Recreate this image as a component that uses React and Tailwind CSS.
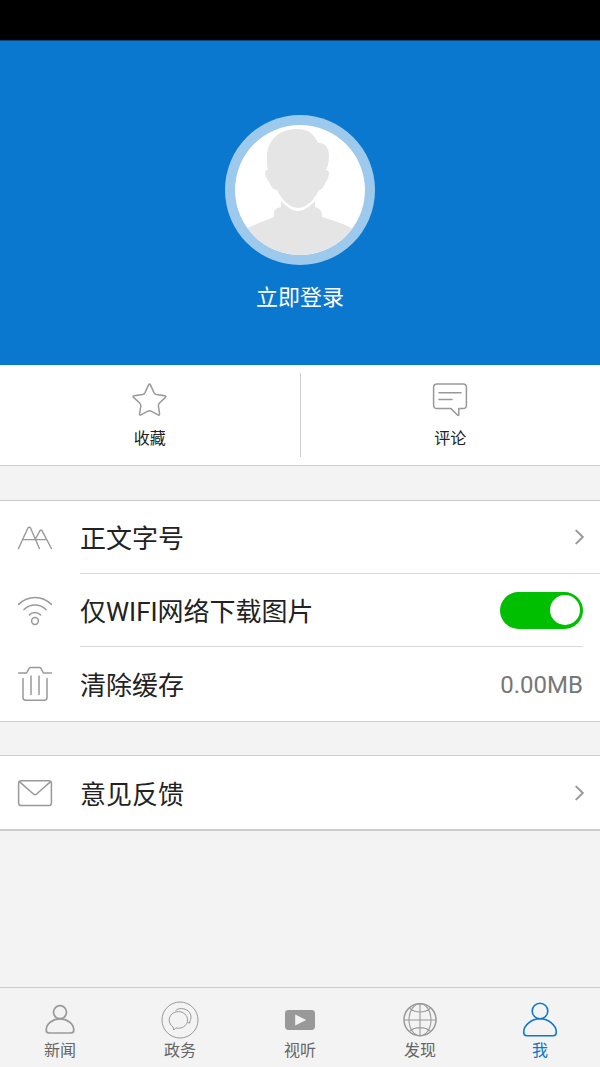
import { useState } from "react";

function Avatar() {
  return (
    <svg viewBox="0 0 130 130" className="size-full" aria-hidden="true">
      <g fill="#e5e5e5">
        <path d="M46 76 C52 82 57 86 63 86 C69 86 74 82 80 76 L80 82 C85 83 87 86 87 92 C100 96 110 99 122 106 L122 130 L8 130 L8 106 C18 99 28 97 39 92 C38 86 40 83 46 82 Z" />
        <path d="M63 4 C73 4 79 9 83 18 C91 17 94 24 94 31 C94 37 93 41 91 45 C96 45 94 52 91 57 C88 63 86 65 84 65 C80 74 71 83 63 83 C55 83 46 74 42 65 C39 65 37 63 34 57 C30 52 28 45 33 45 C32 41 32 38 32 32 C32 14 45 4 63 4 Z" />
      </g>
    </svg>
  );
}

function StarIcon() {
  return (
    <svg width="36" height="36" viewBox="0 0 36 36" fill="none" stroke="#999" strokeWidth="1.5" strokeLinejoin="round" aria-hidden="true">
      <path d="M16.7 2.6 Q17.5 1.2 18.3 2.6 L22 10.6 Q22.8 12.1 24.4 12.5 L32.9 13.7 Q34.6 14.2 33.4 15.4 L27.5 21 Q26.2 22.4 26.4 24.2 L27.6 31.8 Q27.6 33.7 26.1 32.9 L19.5 29.3 Q17.5 28.3 15.5 29.3 L9 32.9 Q7.4 33.7 7.6 31.8 L8.8 24.2 Q9 22.4 7.6 21 L1.6 15.4 Q.4 14.2 2.2 13.7 L10.6 12.5 Q12.2 12.1 13 10.6 Z" />
    </svg>
  );
}

function CommentIcon() {
  return (
    <svg width="36" height="36" viewBox="0 0 36 36" fill="none" stroke="#999" strokeWidth="1.5" strokeLinecap="round" strokeLinejoin="round" aria-hidden="true">
      <path d="M5 2 H31 Q34.4 2 34.4 5.4 V23 Q34.4 26.6 31 26.6 H26.8 V33 Q26.4 34 25.4 33 L19 26.6 H5 Q1.6 26.6 1.6 23 V5.4 Q1.6 2 5 2 Z" />
      <path d="M7 10.8 H29 M7 17.6 H20" />
    </svg>
  );
}

function FontSizeIcon() {
  return (
    <svg width="36" height="36" viewBox="0 0 36 36" fill="none" stroke="#999" strokeWidth="1.4" strokeLinecap="round" strokeLinejoin="round" aria-hidden="true">
      <path d="M1.5 28.5 L11 7.8 Q12.2 6.6 13.4 7.8 L22.4 28.5 M6 19.6 H29.2 M18.4 19 L23 10.6 Q24 9.6 25 10.6 L34.4 28.5" />
    </svg>
  );
}

function WifiIcon() {
  return (
    <svg width="36" height="36" viewBox="0 0 36 36" fill="none" stroke="#999" strokeWidth="1.5" strokeLinecap="round" aria-hidden="true">
      <path d="M1.6 11.4 C11 2.2 25 2.2 34.4 11.4 M7 16.6 C13 10.4 23 10.4 29 16.6 M12.4 22 C15.6 18.8 20.4 18.8 23.6 22" />
      <circle cx="18" cy="28" r="3.4" />
    </svg>
  );
}

function TrashIcon() {
  return (
    <svg width="36" height="36" viewBox="0 0 36 36" fill="none" stroke="#999" strokeWidth="1.5" strokeLinecap="round" strokeLinejoin="round" aria-hidden="true">
      <path d="M1.6 7 H9.6 L12.2 2.2 Q12.6 1.6 13.6 1.6 H22.4 Q23.4 1.6 23.8 2.2 L26.4 7 H34.4 M6 12.6 V31.6 Q6 34.2 8.6 34.2 H27.4 Q30 34.2 30 31.6 V12.6 M14 10 V28.4 M22 10 V28.4" />
    </svg>
  );
}

function MailIcon() {
  return (
    <svg width="36" height="36" viewBox="0 0 36 36" fill="none" stroke="#999" strokeWidth="1.5" strokeLinejoin="round" aria-hidden="true">
      <rect x="1.6" y="5.7" width="32.8" height="24.8" rx="2.6" />
      <path d="M2.4 6.6 L16.4 19 Q18 20.4 19.6 19 L33.6 6.6" />
    </svg>
  );
}

function Chevron() {
  return (
    <svg width="9" height="16" viewBox="0 0 9 16" fill="none" stroke="#999" strokeWidth="2" strokeLinecap="round" strokeLinejoin="round" aria-hidden="true">
      <path d="M1.3 1.6 L7.8 8 L1.3 14.4" />
    </svg>
  );
}

function NewsIcon() {
  return (
    <svg width="38" height="38" viewBox="0 0 38 38" fill="none" stroke="#999" strokeWidth="1.7" aria-hidden="true">
      <circle cx="19" cy="11.2" r="6.5" />
      <path d="M8 32 H30 Q32.8 32 32.8 29 C32.8 22.5 26 17.8 19 17.8 C12 17.8 5.2 22.5 5.2 29 Q5.2 32 8 32 Z" />
    </svg>
  );
}

function GovIcon() {
  return (
    <svg width="38" height="38" viewBox="0 0 38 38" fill="none" stroke="#999" strokeWidth="1" strokeLinejoin="round" aria-hidden="true">
      <circle cx="19" cy="19" r="18" />
      <path d="M12 26 C9.8 24.4 8.2 21.9 8.2 19 C8.2 14.4 12.2 10.6 17.4 10.6 C22.6 10.6 26.6 14.4 26.6 19 C26.6 23.6 22.6 27.2 17.4 27.2 C16.4 27.2 15.6 27.1 14.8 26.9 L12.8 29 Z" />
      <path d="M14.6 9.4 C16.2 8.2 18 7.6 20.4 7.6 C25.8 7.6 30 11.4 30 16 C30 17.8 29.6 19.2 28.8 20.4 L29 22 L26.8 21.6" />
    </svg>
  );
}

function VideoIcon() {
  return (
    <svg width="38" height="38" viewBox="0 0 38 38" aria-hidden="true">
      <rect x="4" y="9" width="30" height="20" rx="3.4" fill="#999" />
      <path d="M14.2 13.6 L25.2 19 L14.2 24.4 Z" fill="#f3f3f3" />
    </svg>
  );
}

function GlobeIcon() {
  return (
    <svg width="38" height="38" viewBox="0 0 38 38" fill="none" stroke="#999" strokeWidth="1.1" aria-hidden="true">
      <circle cx="19" cy="18.7" r="16" strokeWidth="1.5" />
      <ellipse cx="19" cy="18.7" rx="11" ry="16" />
      <path d="M19 2.7 V34.7 M3 19 H35 M8.6 7.4 C14 12.2 24 12.2 29.4 7.4 M8.6 30.2 C14 25.4 24 25.4 29.4 30.2" />
    </svg>
  );
}

function MeIcon() {
  return (
    <svg width="38" height="38" viewBox="0 0 38 38" fill="none" stroke="#0a78ce" strokeWidth="1.6" aria-hidden="true">
      <circle cx="19" cy="10" r="7.8" />
      <path d="M6 34.8 H32 Q35.3 34.8 35.3 31 C35.3 24 27.4 17.8 19 17.8 C10.6 17.8 2.7 24 2.7 31 Q2.7 34.8 6 34.8 Z" />
    </svg>
  );
}

const tabs = [
  { label: "新闻", Icon: NewsIcon },
  { label: "政务", Icon: GovIcon },
  { label: "视听", Icon: VideoIcon },
  { label: "发现", Icon: GlobeIcon },
  { label: "我", Icon: MeIcon, active: true },
];

export default function App() {
  const [wifiOnly, setWifiOnly] = useState(true);

  return (
    <div className="flex min-h-screen flex-col bg-[#f3f3f3] font-['Roboto','Noto_Sans_CJK_SC',sans-serif] text-[#222]">
      <div className="h-10 bg-black" />
      <header className="flex flex-col items-center border-t border-[#084a80] bg-[#0a78ce] pt-[74px] pb-[51px]">
        <div className="size-[150px] rounded-full bg-[#9dc9ec] p-2.5">
          <div className="size-full overflow-hidden rounded-full bg-white">
            <Avatar />
          </div>
        </div>
        <button type="button" className="mt-[17px] text-[22px] leading-8 text-white">
          立即登录
        </button>
      </header>

      <div className="flex items-center border-b border-[#ccc] bg-white">
        <button type="button" className="flex h-[100px] flex-1 flex-col items-center gap-[9px] pt-[17px] text-base leading-6">
          <StarIcon />
          收藏
        </button>
        <div className="h-[84px] w-px bg-[#ccc]" />
        <button type="button" className="flex h-[100px] flex-1 flex-col items-center gap-[9px] pt-[17px] text-base leading-6">
          <CommentIcon />
          评论
        </button>
      </div>

      <main className="flex-1 text-[26px] leading-9">
        <section className="mt-[34px] border-y border-[#ccc] bg-white">
          <button type="button" className="flex w-full items-center pl-[17px] text-left">
            <FontSizeIcon />
            <span className="ml-[27px] flex h-[73px] flex-1 items-center justify-between border-b border-[#d9d9d9] pr-4">
              <span className="pt-1">正文字号</span>
              <Chevron />
            </span>
          </button>
          <div className="flex items-center px-[17px]">
            <WifiIcon />
            <div className="ml-[27px] flex h-[73px] flex-1 items-center justify-between border-b border-[#d9d9d9]">
              <label htmlFor="wifi-only" className="pt-1">
                仅WIFI网络下载图片
              </label>
              <input
                id="wifi-only"
                type="checkbox"
                role="switch"
                checked={wifiOnly}
                onChange={(e) => setWifiOnly(e.target.checked)}
                className="flex h-[37px] w-[83px] cursor-pointer appearance-none items-center rounded-full bg-[#bbb] px-[3px] before:size-[30px] before:rounded-full before:bg-white checked:justify-end checked:bg-[#00bf00]"
              />
            </div>
          </div>
          <button type="button" className="flex w-full items-center px-[17px] text-left">
            <TrashIcon />
            <span className="ml-[27px] flex h-[74px] flex-1 items-center justify-between">
              <span className="pt-1">清除缓存</span>
              <span className="pt-0.5 text-2xl text-[#777]">0.00MB</span>
            </span>
          </button>
        </section>

        <section className="mt-[33px] border-t border-b-2 border-[#ccc] bg-white">
          <button type="button" className="flex w-full items-center pl-[17px] text-left">
            <MailIcon />
            <span className="ml-[27px] flex h-[73px] flex-1 items-center justify-between pr-4">
              <span className="pt-1">意见反馈</span>
              <Chevron />
            </span>
          </button>
        </section>
      </main>

      <nav className="grid grid-cols-5 border-t border-[#ccc] pt-[13px] pb-1">
        {tabs.map(({ label, Icon, active }) => (
          <a
            key={label}
            href="#"
            aria-current={active ? "page" : undefined}
            className={
              active
                ? "flex flex-col items-center text-base leading-6 text-[#0a78ce]"
                : "flex flex-col items-center text-base leading-6 text-[#666]"
            }
          >
            <Icon />
            {label}
          </a>
        ))}
      </nav>
    </div>
  );
}
